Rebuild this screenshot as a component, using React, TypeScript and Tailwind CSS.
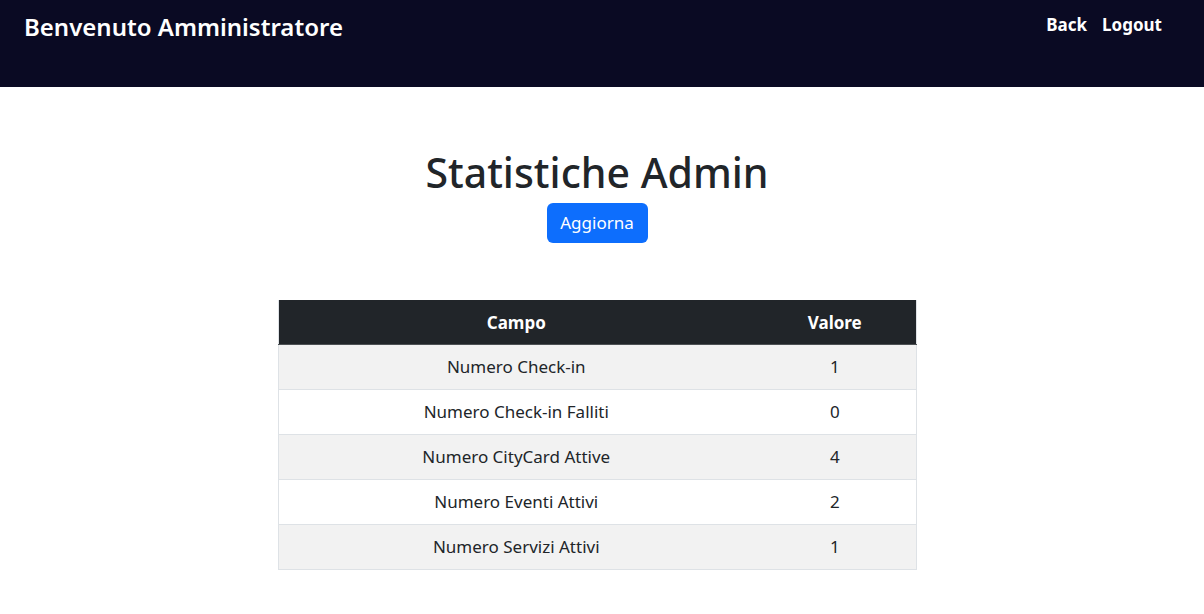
const stats = [
  { campo: 'Numero Check-in', valore: 1 },
  { campo: 'Numero Check-in Falliti', valore: 0 },
  { campo: 'Numero CityCard Attive', valore: 4 },
  { campo: 'Numero Eventi Attivi', valore: 2 },
  { campo: 'Numero Servizi Attivi', valore: 1 },
]

export default function App() {
  return (
    <div className="min-h-screen bg-white font-['Noto_Sans',sans-serif] text-[#212529]">
      {/* Top bar */}
      <header className="h-[87px] bg-[#0a0a23] flex items-start justify-between px-6 text-white">
        <h1 className="mt-[11px] text-[24px] font-semibold leading-[32px]">Benvenuto Amministratore</h1>
        <nav className="mt-[12px] mr-[18px] flex gap-[15px] text-[17px] font-bold leading-[26px]">
          <a href="#">Back</a>
          <a href="#">Logout</a>
        </nav>
      </header>

      <main className="flex flex-col items-center pr-[10px]">
        <h2 className="mt-[61px] text-[41px] font-medium leading-[48px]">Statistiche Admin</h2>
        <button className="mt-[7px] h-[40px] w-[101px] rounded-md bg-[#0d6efd] text-[17px] text-white">
          Aggiorna
        </button>

        <table className="mt-[57px] w-[639px] border-collapse border-x border-[#dee2e6] text-[17px]">
          <thead>
            <tr className="h-[44px] border-b border-[#4d5154] bg-[#212529] text-white">
              <th className="w-[476px] pt-px font-bold">Campo</th>
              <th className="pt-px font-bold">Valore</th>
            </tr>
          </thead>
          <tbody>
            {stats.map((s, i) => (
              <tr
                key={s.campo}
                className={`h-[45px] border-b border-[#dee2e6] ${i % 2 === 0 ? 'bg-[#f2f2f2]' : 'bg-white'}`}
              >
                <td className="pt-px text-center">{s.campo}</td>
                <td className="pt-px text-center">{s.valore}</td>
              </tr>
            ))}
          </tbody>
        </table>
      </main>
    </div>
  )
}
